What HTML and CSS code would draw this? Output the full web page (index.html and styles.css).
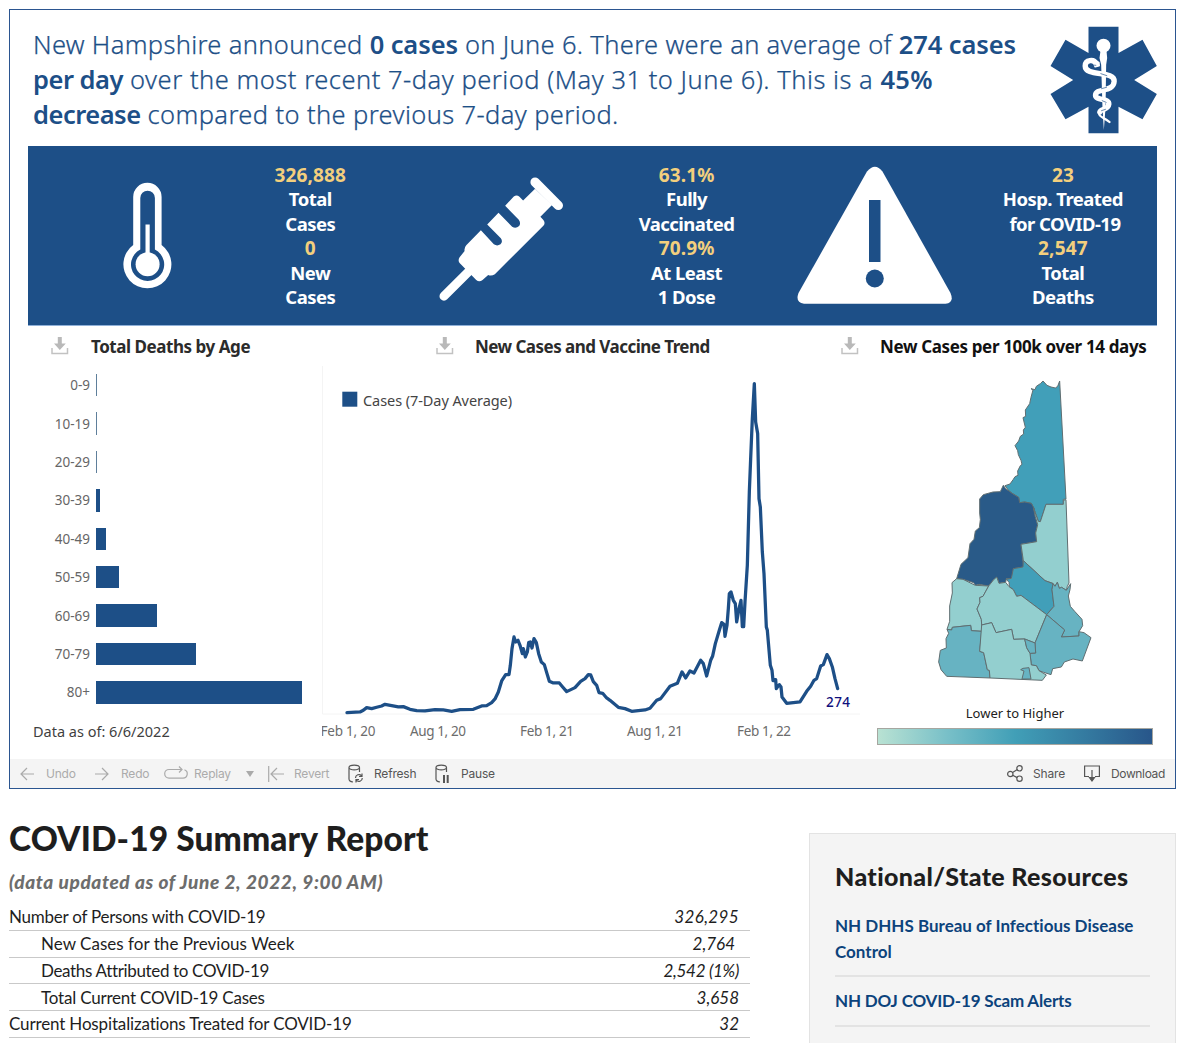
FILE: index.html
```html
<!DOCTYPE html>
<html lang="en">
<head>
<meta charset="utf-8">
<title>New Hampshire COVID-19 Dashboard</title>
<link rel="stylesheet" href="styles.css">
</head>
<body>
<svg class="defs" width="0" height="0">
  <symbol id="save" viewBox="0 0 18 18"><path d="M6.800 0h4v6.500h4L8.800 13 3 6.500h3.800z" fill="#b9b9b9"/><path d="M1 11v5.500h15.500V11" fill="none" stroke="#c2c2c2" stroke-width="1.500"/></symbol>
</svg>
<main class="page">
  <section class="dash">
    <header class="head">
      <p class="headline">
        <span class="l1">New Hampshire announced <b>0 cases</b> on June 6. There were an average of <b>274 cases</b></span>
        <span class="l2"><b>per day</b> over the most recent 7-day period (May 31 to June 6). This is a <b class="pct">45%</b></span>
        <span class="l3"><b>decrease</b> compared to the previous 7-day period.</span>
      </p>
      <svg class="star" viewBox="30 34 320 324">
        <path fill="#1d4f87" d="M145 36h90v79l72-40 43 79-68 42 68 42-43 76-72-38v80h-90v-80l-69 38-45-76 68-42-68-42 45-79 69 40z"/>
        <g fill="none" stroke="#fff" stroke-linecap="round" stroke-linejoin="round">
          <circle cx="190" cy="93" r="21" fill="#fff" stroke="none"/>
          <path d="M181 108h18l2 22-3 20-2 130-5 66-4-66-4-130-5-20z" fill="#fff" stroke="none"/>
          <path d="M168 147C162 133 135 134 135 154C135 188 224 166 222 200C220 235 166 218 166 242C166 259 208 249 206 269C204 286 182 283 179 292" stroke-width="16"/>
          <path d="M206 269C204 286 176 283 177 298C178 308 195 310 208 322" stroke-width="7"/>
          <path d="M160 143q9-6 16 1l1 9-12 3z" fill="#fff" stroke-width="5"/>
          <path d="M157 151l10 1M182 177l18 6M184 222l15-4M186 258l12 5M184 288l12-4" stroke="#1d4f87" stroke-width="2"/>
          <path d="M195 226l-3 30" stroke-width="2"/>
        </g>
      </svg>
    </header>

    <div class="banner">
      <svg class="ico therm" viewBox="123 182 50 107">
        <path fill="#fff" d="M133.200 197a14.200 14.200 0 0 1 28.400 0v48a24 24 0 1 1-28.400 0z"/>
        <path fill="#1d4f87" d="M140.300 198a7.200 7.200 0 0 1 14.600 0v51.500a16.600 16.600 0 1 1-14.600 0z"/>
        <circle cx="147.600" cy="264.300" r="12" fill="#fff"/><path fill="#fff" d="M145.500 224.500h4.200V256h-4.200z"/>
      </svg>
      <p class="stat"><em>326,888</em><span>Total</span><span>Cases</span><em>0</em><span>New</span><span>Cases</span></p>
      <svg class="ico syr" viewBox="56 52 376 374">
        <path d="M71 410L145 336" stroke="#fff" stroke-width="27" stroke-linecap="round"/>
        <path d="M345 67L415 137" stroke="#fff" stroke-width="28" stroke-linecap="round"/>
        <path fill="#fff" d="M345 87L309 122 298 111Q290 104 281 110L255 138 296 180Q303 190 297 199 287 208 276 201L235 159 201 194 242 236Q249 246 241 254 231 261 221 254L182 212 138 257Q131 265 133 274L118 293Q112 302 118 310L168 361Q177 369 187 361L204 346Q213 351 224 344L370 198Q377 190 370 181L361 171 396 136z"/>
      </svg>
      <p class="stat"><em>63.1%</em><span>Fully</span><span>Vaccinated</span><em>70.9%</em><span>At Least</span><span>1 Dose</span></p>
      <svg class="ico tri" viewBox="797 166 156 138">
        <path fill="#fff" d="M867 171.500q8-9.500 15.500 0L950.500 293q4 10-5 10.700H804q-9-1-5.500-10.700z"/>
        <path fill="#1d4f87" d="M869 200h11.500v62H869z"/><circle cx="874.800" cy="278.500" r="9" fill="#1d4f87"/>
      </svg>
      <p class="stat"><em>23</em><span>Hosp. Treated</span><span class="nudge">for COVID-19</span><em>2,547</em><span>Total</span><span>Deaths</span></p>
    </div>

    <div class="charts">
      <section class="ages">
        <h2><svg class="save"><use href="#save"/></svg><span class="t1">Total Deaths by Age</span></h2>
        <div class="bars">
          <div class="bar"><span>0-9</span><i class="thin" style="width:1px"></i></div>
          <div class="bar"><span>10-19</span><i class="thin" style="width:1px"></i></div>
          <div class="bar"><span>20-29</span><i class="thin" style="width:1px"></i></div>
          <div class="bar"><span>30-39</span><i style="width:4px"></i></div>
          <div class="bar"><span>40-49</span><i style="width:9.500px"></i></div>
          <div class="bar"><span>50-59</span><i style="width:23px"></i></div>
          <div class="bar"><span>60-69</span><i style="width:61px"></i></div>
          <div class="bar"><span>70-79</span><i style="width:100px"></i></div>
          <div class="bar"><span>80+</span><i style="width:206px"></i></div>
        </div>
        <p class="asof">Data as of: 6/6/2022</p>
      </section>

      <section class="trend">
        <h2><svg class="save"><use href="#save"/></svg><span class="t2">New Cases and Vaccine Trend</span></h2>
        <svg class="plot" viewBox="322 366 540 384" width="540" height="384">
          <path d="M322.500 366V714H860" fill="none" stroke="#f4f4f4"/>
          <rect x="342.300" y="391.700" width="15" height="15" fill="#1d4f87"/>
          <text x="363" y="405.500" textLength="149" class="lg">Cases (7-Day Average)</text>
          <g transform="translate(310 325.300) scale(.33333)" fill="none" stroke="#1d4f87" stroke-width="9.800" stroke-linejoin="round" stroke-linecap="round">
            <path d="M111 1162L150 1160 160 1155 170 1147 185 1150 200 1146 215 1142 225 1137 245 1141 265 1145 280 1144 300 1152 320 1156 345 1157 375 1153 400 1154 425 1158 450 1153 490 1152 515 1142 530 1141 545 1132 555 1121 565 1100 575 1067 587 1048 597 1048 601 1020 606 970 612 935 617 950 624 945 630 960 637 985 640 970 646 995 652 980 656 952 661 950 666 968 672 940 679 952 686 985 694 1010 703 1018 711 1045 718 1068 730 1073 748 1073 758 1085 770 1099 795 1087 812 1068 825 1060 835 1048 842 1049 850 1069 860 1080 867 1102 878 1104 890 1118 900 1125 925 1146 945 1150 965 1158 1005 1154 1020 1149 1040 1125 1052 1120 1080 1083 1102 1074 1116 1040 1127 1058 1140 1037 1152 1043 1172 1005 1180 1015 1190 1052 1202 1005 1208 992 1216 955 1228 915 1235 892 1242 897 1245 933 1251 900 1255 850 1258 805 1263 800 1270 825 1276 835 1280 890 1287 850 1293 825 1297 904 1301 904 1305 830 1312 720 1318 500 1322 400 1327 280 1333 175 1337 290 1343 325 1347 520 1351 545 1357 680 1362 745 1369 905 1372 915 1381 1020 1386 1035 1389 1066 1397 1063 1399 1090 1408 1078 1413 1085 1416 1115 1430 1134 1470 1130 1490 1098 1502 1083 1512 1065 1520 1060 1532 1022 1540 1018 1551 988 1558 1000 1567 1025 1575 1060 1583 1090"/>
          </g>
          <text x="826" y="707" textLength="24" class="end">274</text>
          <g class="tick">
            <text x="320.500" y="735.500" textLength="55">Feb 1, 20</text>
            <text x="410" y="735.500" textLength="56">Aug 1, 20</text>
            <text x="520" y="735.500" textLength="54">Feb 1, 21</text>
            <text x="627" y="735.500" textLength="56">Aug 1, 21</text>
            <text x="737" y="735.500" textLength="54">Feb 1, 22</text>
          </g>
        </svg>
      </section>

      <section class="county">
        <h2><svg class="save"><use href="#save"/></svg><span class="t3">New Cases per 100k over 14 days</span></h2>
        <svg class="map" viewBox="200 40 540 940" width="180" height="313.333">
          <g stroke="#5f6d70" stroke-width="3" stroke-linejoin="round">
            <path fill="#419fb9" d="M548 64L560 77 572 82 585 85 592 80 598 64 617 418 609 419V434L557 434 547 465 540 486 534 485 524 456 513 431 493 427 478 429 475 413 457 402 446 394 434 378 449 373 459 359 464 351 473 347 472 334 480 318 485 314 482 302 474 285 472 273 464 258 475 244 480 230 490 223 489 211 495 203 488 174 496 170 495 151 508 132 512 113 518 91 512 87 524 90 528 80 540 72z"/>
            <path fill="#295a88" d="M429 377L436 387 446 394 457 402 475 413 478 429 493 427 513 431 522 447 525 471 532 495 526 520 529 546 482 554 490 622 459 627V643L453 656 438 657 436 668 416 671 411 655 400 660 385 679 356 674 345 677 340 669 308 659 289 657 302 614 323 594 329 552 341 539 345 514 357 504 360 480 358 460 358 418 369 405 398 397 420 396z"/>
            <path fill="#93cfcf" d="M617 420L626 670 621 680 618 692 604 683 597 686 591 668 584 680 578 671 554 663 489 603 482 554 529 546 526 520 532 495 525 471 519 444 534 485 540 486 557 434H609V422z"/>
            <path fill="#419fb9" d="M489 603L554 663 578 672 575 690 581 740 559 765 482 707 469 710 459 690 447 681 446 668 438 659 453 656 459 627 488 622z"/>
            <path fill="#93cfcf" d="M289 657L308 659 345 677 385 679 368 710 358 714 359 728 350 748 363 779 365 815 333 813 331 797 276 803 274 811 260 809 268 785 268 739 276 700 275 669z"/>
            <path fill="#93cfcf" d="M400 660L409 652 416 671 436 668 446 681 459 690 469 710 482 707 559 765 524 850 493 838 460 839 454 809 407 819 394 789 364 796 363 779 350 748 359 728 358 714 368 710 385 679z"/>
            <path fill="#67b3c2" d="M578 672L584 680 591 668 597 686 604 683 618 692 631 672 629 690 624 709 630 740 643 755 665 779 667 798 656 816V829L603 832 613 811 559 765 581 740 575 690z"/>
            <path fill="#67b3c2" d="M559 765L613 811 603 832 656 829V816L671 819 692 834 666 904 638 898 612 907 603 922 577 927 572 945 550 938 536 933 528 918 513 916 509 881 526 880 524 850z"/>
            <path fill="#67b3c2" d="M260 809L274 811 276 803 331 797 333 813 364 815 358 875 370 879 381 930 387 932 389 955 259 950 242 930 235 907 240 872 258 865 257 837 265 821z"/>
            <path fill="#93cfcf" d="M364 796L394 789 407 819 454 809 460 839 493 838 499 864 509 881 513 916 528 918 536 933 558 946 546 962 389 955 387 932 381 930 370 879 358 875z"/>
            <path fill="#67b3c2" d="M493 838L524 850 526 880 509 881 499 864zM488 926L506 924 512 958H485L491 934 481 930z"/>
          </g>
        </svg>
        <p class="scale-label">Lower to Higher</p>
        <div class="scale"></div>
      </section>
    </div>

    <footer class="tools">
      <span class="tool off undo"><svg width="14" height="14" viewBox="0 0 14 14"><path d="M14 7H1M7 1L1 7l6 6"/></svg>Undo</span>
      <span class="tool off redo"><svg width="14" height="14" viewBox="0 0 14 14"><path d="M0 7h13M7 1l6 6-6 6"/></svg>Redo</span>
      <span class="tool off replay"><svg width="24" height="14" viewBox="0 0 24 14"><path d="M14 2.500H5a4.300 4.300 0 0 0 0 8.600h14a4.300 4.300 0 0 0 1.500-8.300M12 2.500h6M15-.5l3 3-3 3"/></svg>Replay<i class="caret"></i></span>
      <span class="tool off revert"><svg width="16" height="16" viewBox="0 0 16 16"><path d="M.7 0v16M16 8H3M9 2L3 8l6 6"/></svg>Revert</span>
      <span class="tool refresh"><svg width="15" height="19" viewBox="0 0 15 19"><path d="M1 3.500C1 .3 11.500.3 11.500 3.500S1 6.700 1 3.500V15q0 2.500 4 3M11.500 3.500V8M7.500 14a3.400 3.400 0 0 1 6-2.200M14 9.500v3h-3M14.300 14a3.400 3.400 0 0 1-6 2.200M8 18.500v-3h3"/></svg>Refresh</span>
      <span class="tool pause"><svg width="15" height="19" viewBox="0 0 15 19"><path d="M1 3.500C1 .3 11.500.3 11.500 3.500S1 6.700 1 3.500V15q0 2.500 4 3M11.500 3.500V8"/><path d="M9 11v8M12.700 11v8" stroke-width="2"/></svg>Pause</span>
      <span class="tool share"><svg width="16" height="17" viewBox="0 0 16 17"><circle cx="3.300" cy="9" r="2.700"/><circle cx="12.500" cy="3.300" r="2.700"/><circle cx="12.500" cy="13.700" r="2.700"/><path d="M5.600 7.500l4.700-2.900M5.700 10.200l4.500 2.400"/></svg>Share</span>
      <span class="tool download"><svg width="16" height="17" viewBox="0 0 16 17"><path d="M5 11.500H.6V1h14.800v10.500H11M8 5v10"/><path d="M5.500 12.500h5L8 16z" fill="#555"/></svg>Download</span>
    </footer>
  </section>

  <div class="lower">
    <section class="report">
      <h1>COVID-19 Summary Report</h1>
      <p class="updated">(data updated as of June 2, 2022, 9:00 AM)</p>
      <div class="row"><span class="r1">Number of Persons with COVID-19</span><em class="wide">326,295</em></div>
      <div class="row sub"><span class="r2">New Cases for the Previous Week</span><em class="short">2,764</em></div>
      <div class="row sub"><span class="r3">Deaths Attributed to COVID-19</span><em class="tight">2,542 (1%)</em></div>
      <div class="row sub"><span class="r4">Total Current COVID-19 Cases</span><em>3,658</em></div>
      <div class="row"><span class="r5">Current Hospitalizations Treated for COVID-19</span><em>32</em></div>
    </section>
    <aside class="side">
      <h3>National/State Resources</h3>
      <a class="a1">NH DHHS Bureau of Infectious Disease<br>Control</a>
      <a class="a2">NH DOJ COVID-19 Scam Alerts</a>
    </aside>
  </div>
</main>
</body>
</html>
```
FILE: styles.css
```css
* { box-sizing: border-box; }
body { margin: 0; background: #fff; font-family: "Noto Sans", "Open Sans", sans-serif; }
p, h1, h2, h3 { margin: 0; }
.defs { display: block; position: absolute; }
.page { width: 1200px; height: 1043px; padding: 9px 0 0 9px; overflow: hidden; }
.dash { width: 1167px; height: 780px; border: 1px solid #2b5590; display: flex; flex-direction: column; }

.head { height: 136px; display: flex; justify-content: space-between; padding: 16px 18px 0 23px; flex: none; }
.headline { padding-top: 1px; color: #1d4f87; font-size: 25.500px; line-height: 35px; font-weight: 300; white-space: nowrap; -webkit-text-stroke: .25px #1d4f87; }
.headline span { display: block; }
.headline b { font-weight: 600; letter-spacing: -.5px; -webkit-text-stroke: 0; }
.l1 { letter-spacing: .33px; }
.l2 { letter-spacing: .51px; }
.l3 { letter-spacing: .38px; }
.l1 b { letter-spacing: -.1px; }
.l2 .pct { letter-spacing: .4px; }
.star { width: 107px; height: 108px; }

.banner { height: 180px; margin: 0 18px; flex: none; background: #1d4f87; border-bottom: 1px solid #8fb0d8; display: grid; grid-template-columns: repeat(6, 1fr); align-items: start; justify-items: center; }
.ico { display: block; }
.therm { width: 50px; height: 107px; margin: 36px 0 0 51px; }
.syr { width: 125px; height: 124.700px; margin: 31px 0 0 6px; }
.tri { width: 156px; height: 138px; margin-top: 20px; }
.stat { margin-top: 17px; display: flex; flex-direction: column; align-items: center; color: #fff; font-weight: 700; font-size: 18.500px; line-height: 24.400px; white-space: nowrap; letter-spacing: -.55px; }
.stat em { font-style: normal; font-size: 19px; letter-spacing: .15px; color: #f3cf7d; }
.nudge { padding-left: 4px; }

.charts { flex: 1; display: grid; grid-template-columns: 312px 518px 1fr; }
h2 { display: flex; align-items: center; height: 40px; padding-bottom: 1px; font-size: 17px; font-weight: 700; color: #2b2b2b; white-space: nowrap; }
h2 span { padding-top: 2px; }
.save { width: 18px; height: 18px; flex: none; }
.t1 { letter-spacing: -.45px; }
.t2 { letter-spacing: -.53px; }
.t3 { letter-spacing: -.36px; }
.ages h2 { padding-left: 41px; gap: 22px; }
.trend h2 { padding-left: 114px; gap: 21px; }
.county h2 { gap: 21px; padding-left: 1px; color: #111; }
.bar { height: 38.400px; display: flex; align-items: center; gap: 6px; font-size: 13.500px; color: #666; }
.bar span { width: 80px; text-align: right; }
.bar i { height: 22.500px; background: #1d4f87; }
.bar i.thin { background: #5f7f9b; }
.asof { font-size: 14.500px; line-height: 20px; padding: 9px 0 0 23px; color: #3f3f3f; }
.plot { display: block; }
.plot text { font-family: "Noto Sans", sans-serif; }
.lg { font-size: 14.500px; fill: #444; }
.end { font-size: 13.500px; font-weight: 500; fill: #10107c; }
.tick { font-size: 13.500px; fill: #6c6c6c; }
.map { display: block; margin: 7px 0 0 86.500px; }
.scale-label { width: 276px; margin-left: 37px; text-align: center; font-size: 13px; line-height: 20px; padding-top: 17px; height: 42px; color: #222; }
.scale { width: 276px; height: 17px; margin-left: 37px; border: 1px solid #a6a6a0; background: linear-gradient(90deg, #b9e2d3, #79c0c8 25%, #419fb7 50%, #347aa0 76%, #28568a); }

.tools { height: 29px; margin-top: -1px; flex: none; background: #f4f4f4; display: flex; align-items: center; font-family: Inter, sans-serif; font-size: 12px; letter-spacing: -.2px; color: #555; padding: 0 10px 0 10px; }
.tool { display: flex; align-items: center; }
.tool svg { fill: none; stroke: #555; stroke-width: 1.200; overflow: visible; }
.off { color: #ababab; }
.off svg { stroke: #aaa; }
.undo svg, .redo svg { margin-right: 12px; }
.undo { width: 75px; }
.redo { width: 69px; }
.replay { width: 104px; }
.replay svg { margin-right: 6px; }
.caret { border: 4px solid transparent; border-top: 6px solid #aaa; border-bottom: 0; margin-left: 15px; }
.revert { width: 80px; }
.revert svg { margin-right: 10px; }
.refresh { width: 87px; }
.refresh svg, .pause svg { margin-right: 11px; }
.share { margin-left: auto; margin-right: 19px; }
.share svg { margin-right: 10px; }
.download { letter-spacing: -.35px; }
.download svg { margin-right: 11px; }

.lower { display: flex; justify-content: space-between; width: 1167px; font-family: Lato, sans-serif; color: #1e1e1e; }
.report { width: 741px; padding-top: 27px; }
h1 { font-size: 33.500px; line-height: 44px; font-weight: 900; letter-spacing: .1px; white-space: nowrap; }
.updated { font-size: 19px; line-height: 24px; padding-top: 10px; height: 44px; font-weight: 900; font-style: italic; color: #6d6d6d; white-space: nowrap; letter-spacing: .61px; }
.row { height: 26.750px; display: flex; justify-content: space-between; align-items: center; border-bottom: 1px solid #c9c9c9; font-size: 17px; padding-right: 11px; white-space: nowrap; font-variant-ligatures: none; }
.sub { padding-left: 32px; }
.r1 { letter-spacing: -.25px; }
.r2 { letter-spacing: .03px; }
.r3 { letter-spacing: -.34px; }
.r4 { letter-spacing: -.2px; }
.r5 { letter-spacing: -.15px; }
.wide { letter-spacing: .35px; }
.tight { letter-spacing: -.3px; }
.short { padding-right: 4px; }
.side { width: 367px; height: 240px; margin-top: 44px; background: #f4f4f4; border: 1px solid #e3e3e3; padding: 25px 25px; }
h3 { font-size: 25px; line-height: 34px; font-weight: 900; letter-spacing: .35px; white-space: nowrap; }
.side a { display: block; color: #0c437c; font-size: 17px; line-height: 26px; font-weight: 700; border-bottom: 2px solid #e3e3e3; white-space: nowrap; font-variant-ligatures: none; }
.side .a1 { padding: 20px 0 10px; }
.side .a2 { padding: 11px 0 11px; letter-spacing: -.18px; }
```
